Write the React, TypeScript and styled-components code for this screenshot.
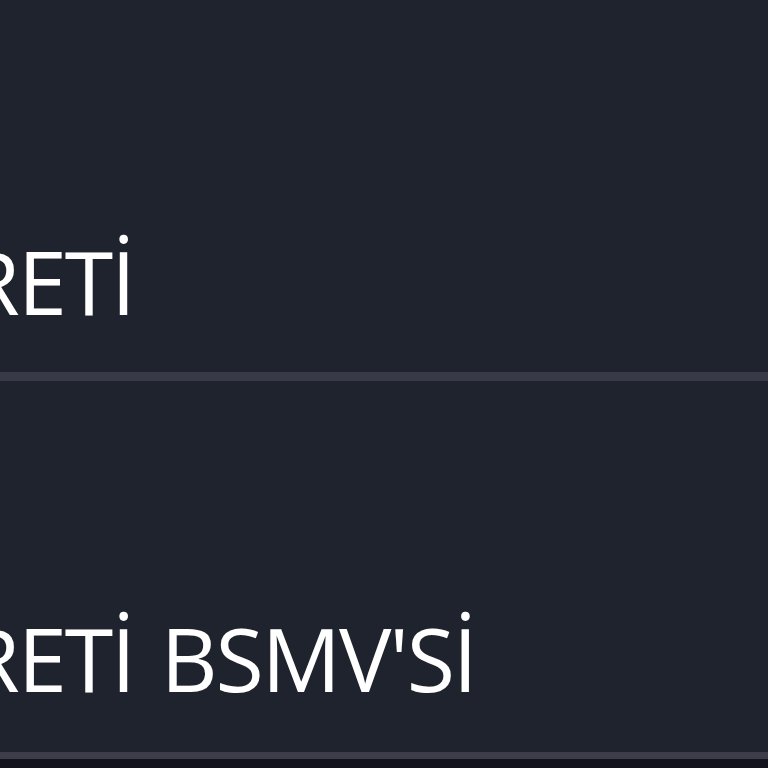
import React from 'react';
import styled, { createGlobalStyle } from 'styled-components';

const GlobalStyle = createGlobalStyle`
  html, body {
    margin: 0;
    padding: 0;
    background-color: #13131e;
  }
  body {
    font-family: "Open Sans", "Noto Sans", sans-serif;
    overflow: hidden;
  }
`;

const rows = [
  { label: 'ÜCRETİ', padTop: 237, height: 381, border: '#383a47', borderWidth: 9 },
  { label: 'ÜCRETİ BSMV\'Sİ', padTop: 233, height: 378, border: '#3d3c4b', borderWidth: 7 },
];

export default function App() {
  return (
    <>
      <GlobalStyle />
      <Table>
        {rows.map((row) => (
          <Row
            key={row.label}
            $padTop={row.padTop}
            $height={row.height}
            $border={row.border}
            $borderWidth={row.borderWidth}
          >
            <Label>{row.label}</Label>
          </Row>
        ))}
      </Table>
    </>
  );
}

const Table = styled.div`
  width: 768px;
  height: 768px;
  overflow: hidden;
  display: flex;
  flex-direction: column;
  background-color: #13131e;
`;

const Row = styled.div<{
  $padTop: number;
  $height: number;
  $border: string;
  $borderWidth: number;
}>`
  box-sizing: border-box;
  flex: none;
  height: ${(p) => p.$height}px;
  padding-top: ${(p) => p.$padTop}px;
  background-color: #1f232e;
  border-bottom: ${(p) => p.$borderWidth}px solid ${(p) => p.$border};
  overflow: hidden;
`;

const Label = styled.div`
  margin-left: -150px;
  font-size: 88px;
  line-height: 88px;
  font-weight: 400;
  letter-spacing: -2px;
  word-spacing: 6px;
  color: #ffffff;
  white-space: nowrap;
`;
